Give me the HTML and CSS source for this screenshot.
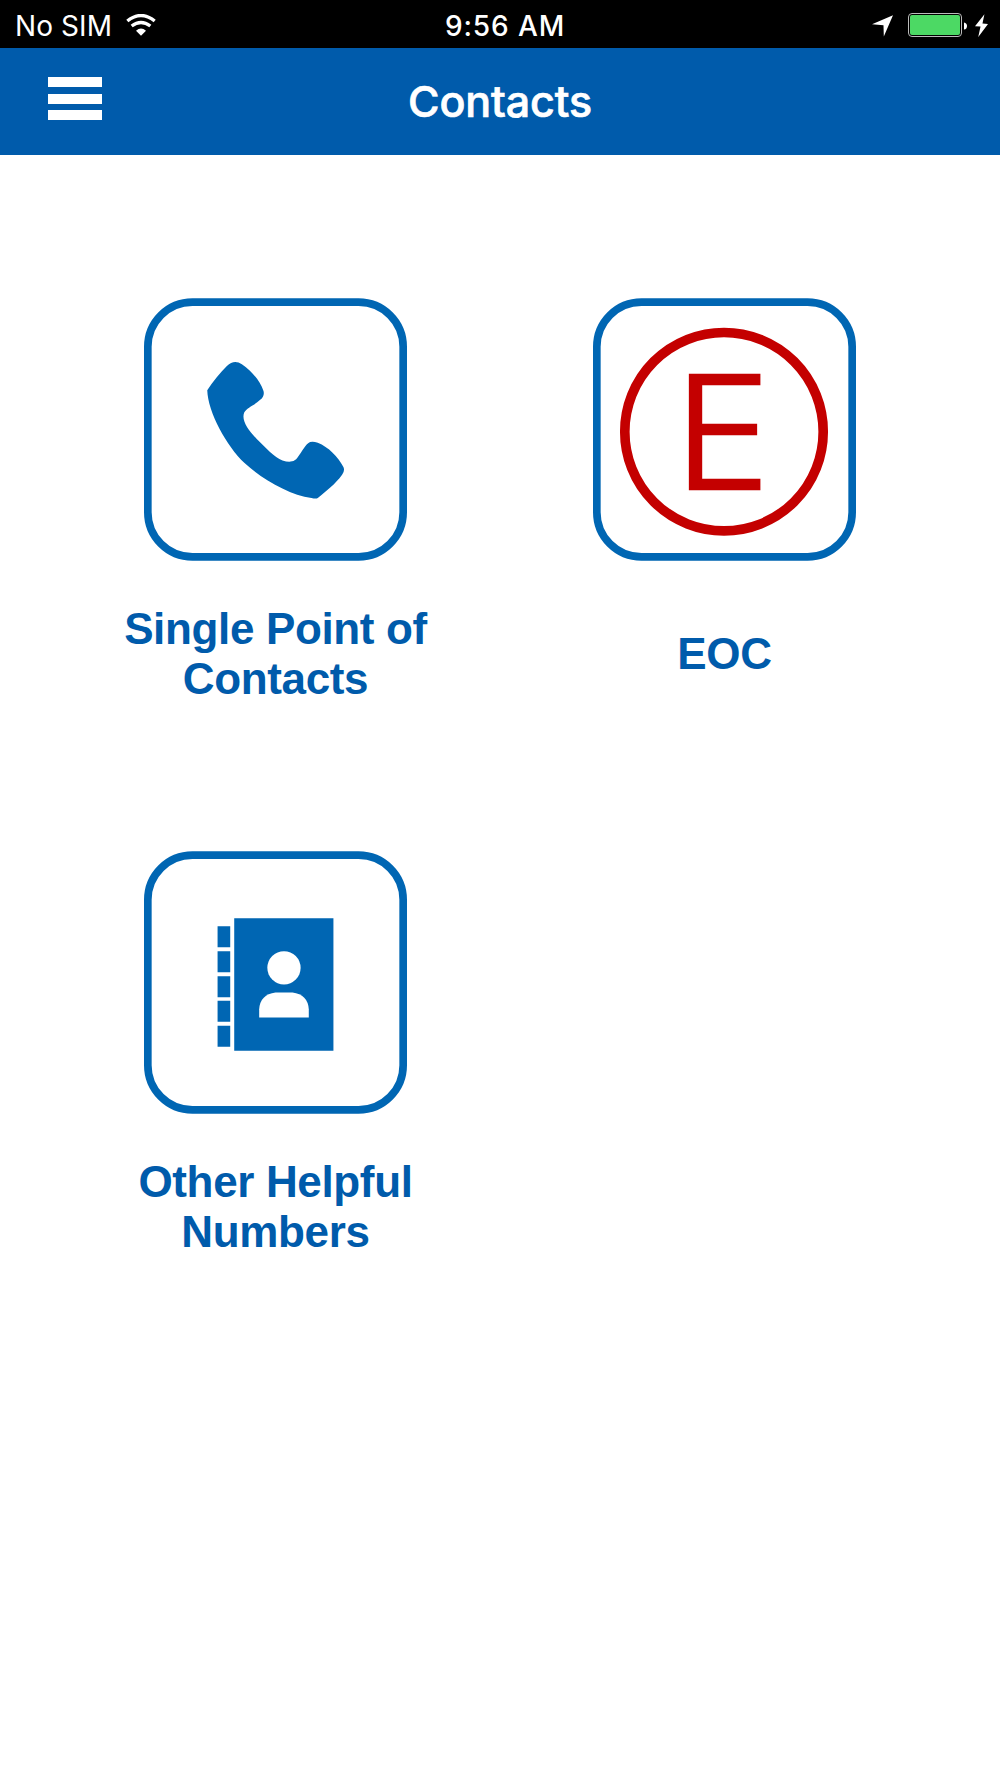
FILE: index.html
```html
<!DOCTYPE html>
<html lang="en">
<head>
    <meta charset="UTF-8">
    <meta name="viewport" content="width=device-width, initial-scale=1.0">
    <title>Contacts</title>
    <link rel="stylesheet" href="styles.css">
</head>
<body>

    <div class="status-bar">
        <div class="status-left">
            <span class="carrier">No SIM</span>
            <svg class="wifi" viewBox="0 0 90 66">
                <path d="M4 21 Q45 -12 86 21" fill="none" stroke="#fff" stroke-width="10"/>
                <path d="M17 36 Q45 15 73 36" fill="none" stroke="#fff" stroke-width="10"/>
                <path d="M30 50 Q45 37 60 50 L45 65 Z" fill="#fff"/>
            </svg>
        </div>
        <span class="time">9:56 AM</span>
        <div class="status-right">
            <svg class="location" viewBox="0 0 64 66">
                <path d="M64 0 L36 65 L35 31 L0 28 Z" fill="#fff"/>
            </svg>
            <div class="battery"><div class="battery-level"></div></div>
            <svg class="battery-cap" viewBox="0 0 10 24">
                <path d="M0 0 Q10 2 10 12 Q10 22 0 24 Z" fill="#fff"/>
            </svg>
            <svg class="bolt" viewBox="0 0 40 70">
                <path d="M29 0 L0 37 L17 38 L10 70 L40 30 L23 29 Z" fill="#fff"/>
            </svg>
        </div>
    </div>

    <header>
        <button class="menu" aria-label="Menu">
            <span></span>
            <span></span>
            <span></span>
        </button>
        <h1>Contacts</h1>
    </header>

    <main>
        <a class="tile" href="#">
            <svg class="tile-icon" viewBox="41 39 790 788">
                <rect class="frame" x="52.5" y="50.5" width="767" height="765" rx="134"/>
                <path class="fill" d="M231 315 C248 288 269 263 290 242 Q312 221 335 237 C367 260 390 288 400 317 Q404 333 390 344 C374 359 350 367 342 382 C333 405 352 433 379 461 C405 487 433 517 457 526 Q484 536 498 522 C512 506 520 486 534 474 Q544 466 563 473 C595 486 624 515 640 546 Q645 557 636 569 C616 597 588 618 563 639 Q558 642 544 639 C479 630 398 584 343 534 C289 482 233 381 231 315 Z"/>
            </svg>
            <span class="label">Single Point of<br>Contacts</span>
        </a>

        <a class="tile" href="#">
            <svg class="tile-icon" viewBox="39 39 790 788">
                <rect class="frame" x="50.5" y="50.5" width="767" height="765" rx="134"/>
                <circle class="ring" cx="432.5" cy="439.5" r="298"/>
                <text class="letter" transform="translate(282 607.5) scale(1.09 1)">E</text>
            </svg>
            <span class="label">EOC</span>
        </a>

        <a class="tile" href="#">
            <svg class="tile-icon" viewBox="41 33 790 788">
                <rect class="frame" x="52.5" y="44.5" width="767" height="765" rx="134"/>
                <path class="fill" d="M262 258h38v63h-38zM262 333h38v63h-38zM262 408h38v63h-38zM262 482h38v63h-38zM262 557h38v63h-38zM312 234h298v398h-298z"/>
                <circle cx="461.5" cy="383" r="50" fill="#fff"/>
                <path d="M387 532 V507 Q390 463 436 457 H487 Q533 463 536 507 V532 Z" fill="#fff"/>
            </svg>
            <span class="label">Other Helpful<br>Numbers</span>
        </a>
    </main>

</body>
</html>
```
FILE: styles.css
```css
body {
    margin: 0;
    background: #fff;
    font-family: 'Liberation Sans', Arial, sans-serif;
}

/* Status bar */
.status-bar {
    display: grid;
    grid-template-columns: 1fr auto 1fr;
    align-items: center;
    box-sizing: border-box;
    height: 48px;
    padding: 0 12px 0 15px;
    background: #000;
    color: #fff;
    font-family: Inter, sans-serif;
    font-size: 28px;
    line-height: 48px;
}

.status-left, .status-right {
    display: flex;
    align-items: center;
}

.status-right { justify-content: flex-end; }
.carrier { letter-spacing: 0.1px; padding-top: 2px; }
.time { font-weight: 500; letter-spacing: 0.9px; padding: 2px 0 0 7px; }
.wifi { width: 30px; height: 22px; margin-left: 14px; }
.location { width: 21px; height: 22px; margin: 1px 15px 0 0; }

.battery {
    box-sizing: border-box;
    width: 54px;
    height: 24px;
    padding: 1px;
    border: 1px solid #bbb;
    border-radius: 4px;
}

.battery-level { height: 100%; background: #4cd964; border-radius: 2px; }
.battery-cap { width: 3px; height: 8px; margin: 1px 8px 0 2px; }
.bolt { width: 13px; height: 23px; }

/* Title bar */
header {
    display: grid;
    grid-template-columns: 1fr auto 1fr;
    box-sizing: border-box;
    height: 107px;
    padding: 0 48px;
    background: #005bab;
    color: #fff;
}

.menu {
    display: flex;
    flex-direction: column;
    gap: 6.5px;
    width: 54px;
    margin-top: 29px;
    padding: 0;
    border: none;
    background: none;
}

.menu span { width: 100%; height: 10px; background: #fff; }

h1 {
    margin: 0;
    font-family: Inter, sans-serif;
    font-size: 43px;
    font-weight: 500;
    letter-spacing: -0.1px;
    line-height: 107px;
    -webkit-text-stroke: 0.7px #fff;
}

/* Tiles */
main {
    display: grid;
    grid-template-columns: 1fr 1fr;
    row-gap: 147px;
    padding: 143px 51px 0;
}

.tile {
    display: flex;
    flex-direction: column;
    align-items: center;
    color: #005bab;
    text-decoration: none;
}

.tile-icon { width: 263px; height: 263px; }
.frame { fill: none; stroke: #0066b3; stroke-width: 23; }
.fill { fill: #0066b3; }
.ring { fill: none; stroke: #c40000; stroke-width: 29; }

.letter {
    fill: #c40000;
    stroke: #c40000;
    stroke-width: 13;
    font-family: 'Open Sans', sans-serif;
    font-size: 472px;
    font-weight: 300;
}

.label {
    display: flex;
    align-items: center;
    height: 100px;
    margin-top: 43px;
    font-size: 44px;
    font-weight: bold;
    letter-spacing: -0.35px;
    line-height: 50px;
    text-align: center;
}
```
